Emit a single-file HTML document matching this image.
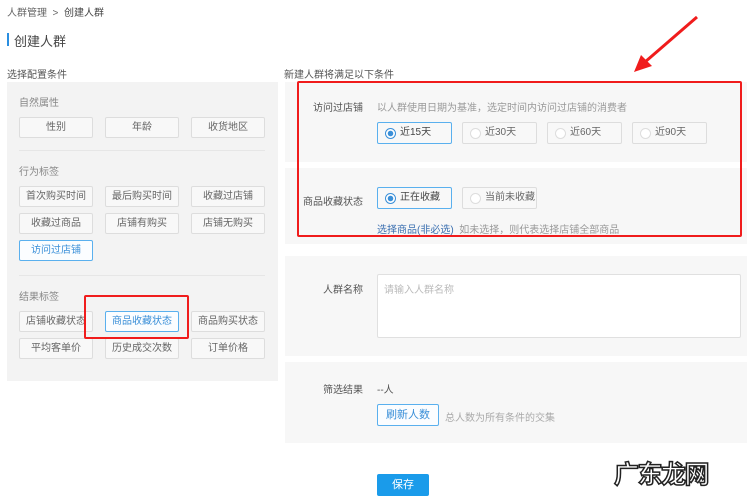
<!DOCTYPE html>
<html><head><meta charset="utf-8"><style>
*{margin:0;padding:0;box-sizing:border-box}
body{width:747px;height:504px;background:#fff;position:relative;overflow:hidden;font-family:"Liberation Sans","Noto Sans CJK SC",sans-serif;font-size:10px;color:#555}
.a{position:absolute;white-space:nowrap}
.btn{position:absolute;height:21px;border:1px solid #ddd;background:#f8f8f8;border-radius:2px;text-align:center;line-height:19px;font-size:10px;color:#666;white-space:nowrap}
.blue{border-color:#5ab0ee;color:#3a8fd8;background:#fbfdff}
.rad{position:absolute;height:22px;width:75px;border:1px solid #ddd;background:#f8f8f8;border-radius:2px;line-height:20px;font-size:10px;color:#666;padding-left:22px;white-space:nowrap}
.rad:before{content:"";position:absolute;left:7px;top:5px;width:9px;height:9px;border-radius:50%;border:1px solid #ddd;background:#fff}
.rad.on{border-color:#5ab0ee;color:#444}
.rad.on:before{border-color:#3a8fd8;background:radial-gradient(circle,#3a8fd8 0 2.5px,#fff 3px)}
.panel{position:absolute;background:#f7f7f7}
.lbl{position:absolute;color:#555;font-size:10px;text-align:right;width:80px}
</style></head><body>
<div class="a" style="left:7px;top:4px;font-size:10px;color:#666">人群管理 &nbsp;&gt;&nbsp; <span style="color:#444">创建人群</span></div>
<div class="a" style="left:7px;top:33px;width:2px;height:13px;background:#2a8ee0"></div>
<div class="a" style="left:14px;top:31px;font-size:13px;color:#444">创建人群</div>
<div class="a" style="left:7px;top:66px;color:#555">选择配置条件</div>
<div class="a" style="left:7px;top:82px;width:271px;height:299px;background:#f3f3f3"></div>
<div class="a" style="left:19px;top:94px;color:#888">自然属性</div>
<div class="btn" style="left:19px;top:117px;width:74px">性别</div>
<div class="btn" style="left:105px;top:117px;width:74px">年龄</div>
<div class="btn" style="left:191px;top:117px;width:74px">收货地区</div>
<div class="a" style="left:19px;top:150px;width:246px;height:1px;background:#e6e6e6"></div>
<div class="a" style="left:19px;top:163px;color:#888">行为标签</div>
<div class="btn" style="left:19px;top:186px;width:74px">首次购买时间</div>
<div class="btn" style="left:105px;top:186px;width:74px">最后购买时间</div>
<div class="btn" style="left:191px;top:186px;width:74px">收藏过店铺</div>
<div class="btn" style="left:19px;top:213px;width:74px">收藏过商品</div>
<div class="btn" style="left:105px;top:213px;width:74px">店铺有购买</div>
<div class="btn" style="left:191px;top:213px;width:74px">店铺无购买</div>
<div class="btn blue" style="left:19px;top:240px;width:74px">访问过店铺</div>
<div class="a" style="left:19px;top:275px;width:246px;height:1px;background:#e6e6e6"></div>
<div class="a" style="left:19px;top:288px;color:#888">结果标签</div>
<div class="btn" style="left:19px;top:311px;width:74px">店铺收藏状态</div>
<div class="btn blue" style="left:105px;top:311px;width:74px">商品收藏状态</div>
<div class="btn" style="left:191px;top:311px;width:74px">商品购买状态</div>
<div class="btn" style="left:19px;top:338px;width:74px">平均客单价</div>
<div class="btn" style="left:105px;top:338px;width:74px">历史成交次数</div>
<div class="btn" style="left:191px;top:338px;width:74px">订单价格</div>
<div class="a" style="left:84px;top:295px;width:105px;height:44px;border:2px solid #f01c1c;border-radius:2px"></div>

<div class="a" style="left:284px;top:66px;color:#555">新建人群将满足以下条件</div>
<div class="panel" style="left:285px;top:82px;width:462px;height:80px"></div>
<div class="panel" style="left:285px;top:168px;width:462px;height:76px"></div>
<div class="lbl" style="left:283px;top:99px">访问过店铺</div>
<div class="a" style="left:377px;top:99px;color:#999">以人群使用日期为基准，选定时间内访问过店铺的消费者</div>
<div class="rad on" style="left:377px;top:122px">近15天</div>
<div class="rad" style="left:462px;top:122px">近30天</div>
<div class="rad" style="left:547px;top:122px">近60天</div>
<div class="rad" style="left:632px;top:122px">近90天</div>
<div class="lbl" style="left:283px;top:193px">商品收藏状态</div>
<div class="rad on" style="left:377px;top:187px">正在收藏</div>
<div class="rad" style="left:462px;top:187px">当前未收藏</div>
<div class="a" style="left:377px;top:221px;color:#3a6fb0">选择商品(非必选) <span style="color:#999">&nbsp;如未选择，则代表选择店铺全部商品</span></div>
<div class="a" style="left:297px;top:81px;width:445px;height:156px;border:2px solid #f01c1c;border-radius:2px"></div>

<div class="panel" style="left:285px;top:256px;width:462px;height:100px"></div>
<div class="lbl" style="left:283px;top:281px">人群名称</div>
<div class="a" style="left:377px;top:274px;width:364px;height:64px;background:#fff;border:1px solid #e0e0e0;border-radius:2px;padding:6px;color:#bbb">请输入人群名称</div>
<div class="panel" style="left:285px;top:362px;width:462px;height:81px"></div>
<div class="lbl" style="left:283px;top:381px">筛选结果</div>
<div class="a" style="left:377px;top:381px;color:#555">--人</div>
<div class="btn blue" style="left:377px;top:404px;width:62px;height:22px;font-size:11px;line-height:20px">刷新人数</div>
<div class="a" style="left:445px;top:409px;color:#aaa">总人数为所有条件的交集</div>
<div class="a" style="left:377px;top:474px;width:52px;height:22px;background:#1a9bea;color:#fff;border-radius:2px;text-align:center;line-height:22px;font-size:11px">保存</div>
<div class="a" style="left:614px;top:455px;font-size:25px;font-weight:bold;color:#fff;-webkit-text-stroke:1.5px #222;letter-spacing:-1.5px">广东龙网</div>
<svg class="a" style="left:0;top:0" width="747" height="504"><line x1="697" y1="17" x2="645" y2="62" stroke="#f01c1c" stroke-width="3"/><polygon points="634,72 641,55 652,66" fill="#f01c1c"/></svg>
</body></html>
